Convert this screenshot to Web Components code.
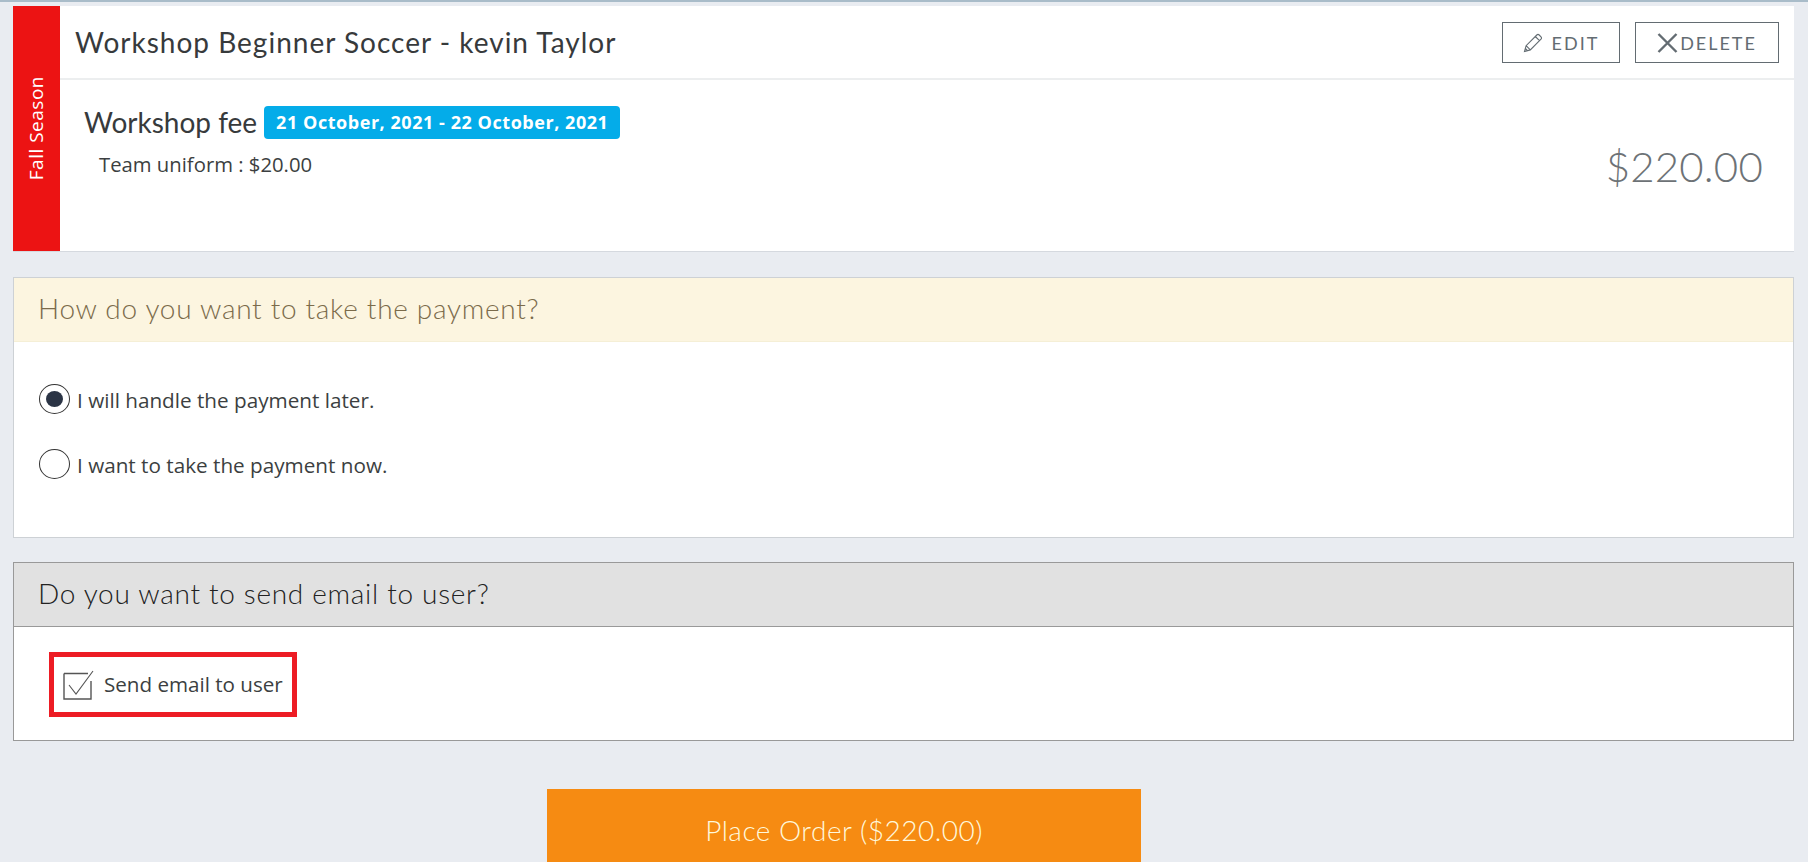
<!DOCTYPE html>
<html lang="en"><head><meta charset="utf-8"><title>Order</title>
<style>
html,body{margin:0;height:862px;overflow:hidden;background:#e9ecf1}
body{font-family:"Open Sans","Liberation Sans",sans-serif;color:#373a3c}
</style></head><body>
<checkout-page>
  <order-card season="Fall Season" heading="Workshop Beginner Soccer - kevin Taylor" fee="Workshop fee" dates="21 October, 2021 - 22 October, 2021" extra="Team uniform : $20.00" price="$220.00"></order-card>
  <panel-box tone="warn" heading="How do you want to take the payment?">
    <radio-option checked>I will handle the payment later.</radio-option>
    <radio-option>I want to take the payment now.</radio-option>
  </panel-box>
  <panel-box tone="grey" heading="Do you want to send email to user?">
    <check-option>Send email to user</check-option>
  </panel-box>
  <place-order>Place Order ($220.00)</place-order>
</checkout-page>
<script>
const def=(name,html,attrs)=>customElements.define(name,class extends HTMLElement{
  constructor(){super();this.attachShadow({mode:'open'}).innerHTML=html}
  connectedCallback(){
    this.shadowRoot.querySelectorAll('[data-a]').forEach(e=>e.textContent=this.getAttribute(e.dataset.a)||'');
  }
});
def('checkout-page',`<style>
:host{display:flex;flex-direction:column;border-top:2px solid #a9bcc9;padding:4px 14px 0 13px}
</style><slot></slot>`);
def('outline-btn',`<style>
:host{display:inline-flex;align-items:center;justify-content:center;box-sizing:border-box;height:41px;border:1px solid #636c72;color:#636c72;font:400 18px/1 Lato,sans-serif;letter-spacing:2px}
</style><slot></slot>`);
def('order-card',`<style>
:host{display:flex;height:246px;background:#fff;border-bottom:1px solid #d5d9df;box-sizing:border-box}
.band{flex:0 0 47px;background:#ec1313;position:relative;display:flex;align-items:center;justify-content:center}
.band span{writing-mode:vertical-rl;transform:rotate(180deg);color:#fff;font:400 19px/1 "Open Sans",sans-serif;letter-spacing:.5px;margin-top:-1px}
.main{flex:1;display:flex;flex-direction:column;margin-top:2px}
header{height:70px;border-bottom:2px solid #eceeef;display:flex;align-items:center;justify-content:space-between;padding:0 15px 0 15px}
h1{margin:0 0 3px;font:400 28px/1 Lato,sans-serif;color:#373a3c;letter-spacing:1px}
.btns{display:flex;gap:15px;margin-top:-1px}
.edit{width:118px;gap:9px}.del{width:144px;gap:2px}
.body{flex:1;display:flex;justify-content:space-between;padding:26px 31px 0 24px}
.fee{display:flex;align-items:center;gap:7px;font:400 28px/33px Lato,sans-serif}
.tag{background:#04ace9;color:#fff;border-radius:4px;font:700 18px/33px "Open Sans",sans-serif;padding:0 12px;letter-spacing:.55px}
.extra{margin:12px 0 0 15px;font:400 20.3px/26px "Open Sans",sans-serif;color:#3c3f41}
.price{font:300 42px/1 Lato,sans-serif;color:#6d7276;margin-top:39px;letter-spacing:.2px}
</style>
<div class="band"><span data-a="season"></span></div>
<div class="main">
<header><h1 data-a="heading"></h1><div class="btns">
<outline-btn class="edit"><svg width="20" height="20" viewBox="0 0 20 20" fill="none" stroke="#636c72" stroke-width="1.1"><path d="M1.5 18.5l1.6-5.8L13.8 2c.7-.7 1.7-.7 2.4 0l1.8 1.8c.7.7.7 1.7 0 2.4L7.3 16.9zM3.1 12.7l4.2 4.2M12.3 3.5l4.2 4.2M2.4 15.5l2.1 2.1"/></svg><span>EDIT</span></outline-btn>
<outline-btn class="del"><svg width="21" height="20" viewBox="0 0 21 20" fill="none" stroke="#636c72" stroke-width="2.4"><path d="M1.5 1l18 18M19.5 1l-18 18"/></svg><span>DELETE</span></outline-btn>
</div></header>
<div class="body"><div><div class="fee"><span data-a="fee"></span><span class="tag" data-a="dates"></span></div><div class="extra" data-a="extra"></div></div><div class="price" data-a="price"></div></div>
</div>`);
def('panel-box',`<style>
:host{display:block;background:#fff;box-sizing:border-box;border:1px solid #cdd1d5;margin-top:25px;height:261px}
:host([tone=grey]){border-color:#999;height:179px;margin-top:24px}
h2{margin:0;height:64px;box-sizing:border-box;padding:0 24px 3px;display:flex;align-items:center;background:#fcf5e0;border-bottom:1px solid #f5efd6;font:300 28px/1 Lato,sans-serif;color:#7b6b4b;letter-spacing:.7px}
:host([tone=grey]) h2{background:#e1e1e1;border-bottom-color:#999;color:#222}
.c{padding:42px 25px 0}
:host([tone=grey]) .c{padding:25px 35px 0}
</style><h2 data-a="heading"></h2><div class="c"><slot></slot></div>`);
def('radio-option',`<style>
:host{display:flex;align-items:center;gap:7px;height:30px;margin-bottom:35px;font:400 20.7px/30px "Open Sans",sans-serif;color:#3c3f41}
i{width:31px;height:30px;box-sizing:border-box;border:1px solid #333;border-radius:50%;display:flex;align-items:center;justify-content:center;background:#fff}
:host([checked]) i::after{content:"";width:17px;height:16px;border-radius:50%;background:#2b3445}
span{position:relative;top:1px}
</style><i></i><span><slot></slot></span>`);
def('check-option',`<style>
:host{display:inline-flex;align-items:center;gap:10px;box-sizing:border-box;height:65px;border:5px solid #ed1c24;padding:0 9px;font:400 20.6px/1 "Open Sans",sans-serif;color:#3c3f41}
svg{display:block}
</style><svg width="31" height="30" viewBox="0 0 31 30" fill="none"><path d="M1 3.5h24M1 3.5v25.5h27V11" stroke="#555" stroke-width="1.4"/><path d="M6 15l7 9L30 1" stroke="#555" stroke-width="1.1"/></svg><span><slot></slot></span>`);
def('place-order',`<style>
:host{display:block;box-sizing:border-box;width:594px;height:90px;margin:48px 0 0 534px;background:#f68b12;color:#fff8dc;text-align:center;font:300 28px/83px Lato,sans-serif;letter-spacing:.5px}
</style><slot></slot>`);
</script>
</body></html>
